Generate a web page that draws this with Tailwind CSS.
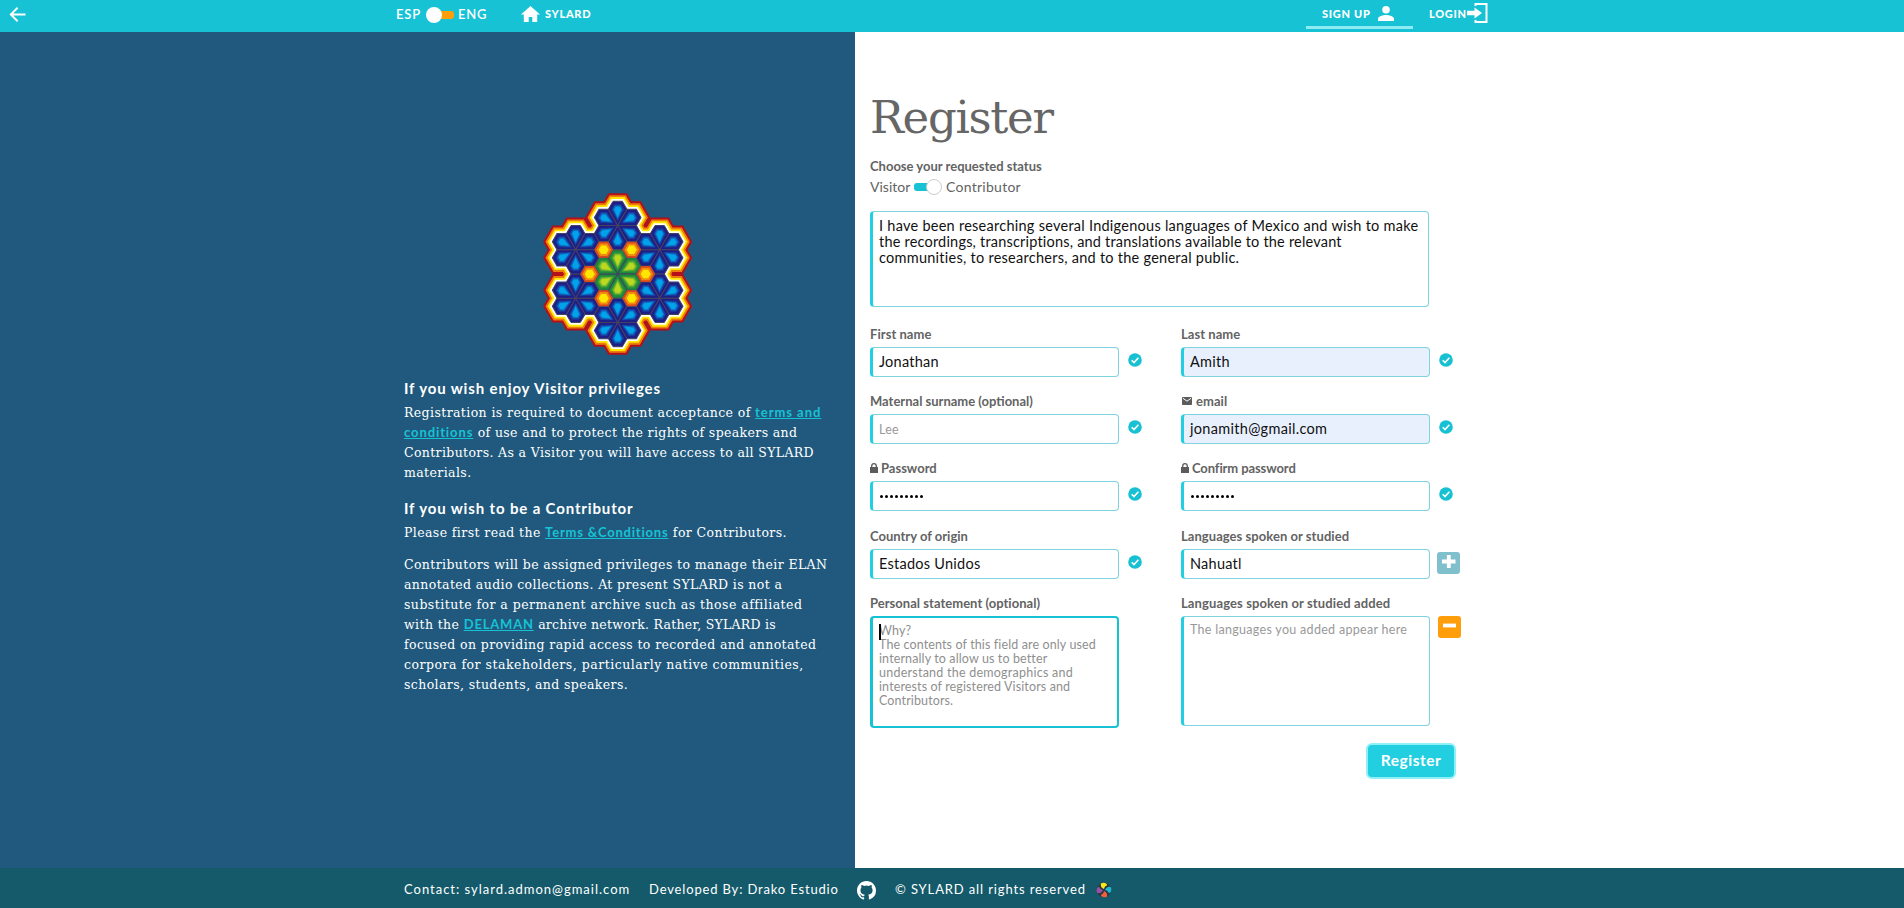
<!DOCTYPE html>
<html lang="en">
<head>
<meta charset="utf-8">
<title>SYLARD - Register</title>
<script src="https://cdn.jsdelivr.net/npm/@tailwindcss/browser@4"></script>
</head>
<body class="flex h-[908px] w-[1904px] flex-col overflow-hidden bg-white font-['Lato',sans-serif] text-[#636363]">

<svg class="hidden">
  <defs>
    <symbol id="check" viewBox="0 0 14 14"><circle cx="7" cy="7" r="6.8" fill="#17c1d3"/><path d="M3.7 7.3 6 9.6l4.4-4.9" fill="none" stroke="#fff" stroke-width="1.6"/></symbol>
    <symbol id="lock" viewBox="0 0 8 10"><path d="M0 4h8v6H0z" fill="#5c5c5c"/><path d="M1.7 4.5V3a2.3 2.3 0 0 1 4.6 0v1.5" fill="none" stroke="#5c5c5c" stroke-width="1.3"/></symbol>
  </defs>
</svg>

<header class="flex h-8 shrink-0 items-start bg-[#17c2d4] text-white">
  <div class="flex h-7 w-[396px] items-center pl-[9px]">
    <svg class="h-[15px] w-[17px]" viewBox="0 0 17 15" fill="none" stroke="#fff" stroke-width="1.9"><path d="M16.5 7.5H1.8M8.6.8 1.8 7.5l6.8 6.7"/></svg>
  </div>
  <div class="flex h-[29px] w-[125px] items-center text-[13px] font-semibold tracking-[0.8px]">
    <span class="w-[30px]">ESP</span>
    <span class="flex w-[32px] items-center"><span class="z-10 size-4 rounded-full bg-white"></span><span class="-ml-1.5 h-2 w-[18px] rounded-[3px] bg-[#ff9d0a]"></span></span>
    <span>ENG</span>
  </div>
  <div class="flex h-7 w-[785px] items-center text-[11px] font-black tracking-[0.7px]">
    <svg class="mr-[5px] h-4 w-[19px]" viewBox="0 0 19 16" fill="#fff"><path d="M9.5 0 0 8.6h2.8V16h4.9v-5h3.6v5h4.9V8.6H19z"/></svg>SYLARD
  </div>
  <div class="flex h-[29px] w-[107px] items-center border-b-3 border-[#8eeaf3] pl-4 text-[11px] font-black tracking-[0.7px]">
    <span class="mt-0.5 w-[56px]">SIGN UP</span>
    <svg class="mt-px h-[15px] w-4" viewBox="0 0 16 15" fill="#fff"><circle cx="8" cy="3.8" r="3.8"/><path d="M0 15v-2.2C0 10.2 5.2 9 8 9s8 1.2 8 3.8V15z"/></svg>
  </div>
  <div class="flex h-7 items-center pl-4 text-[11px] font-black tracking-[0.7px]">
    <span class="w-[38px]">LOGIN</span>
    <svg class="-mt-0.5 h-5 w-[21px]" viewBox="0 0 21 20"><path d="M8.5 3V1h11v18h-11v-2" fill="none" stroke="#fff" stroke-width="2"/><path d="M0 7.8h7.5V4.6L15 10l-7.5 5.4v-3.2H0z" fill="#fff"/></svg>
  </div>
</header>

<main class="flex h-[836px] shrink-0">
  <section class="w-[855px] bg-[#20597d] pl-[404px] pt-[148px] text-white">
    <svg class="ml-[126px] h-[190px] w-[180px]" viewBox="0 0 540 570">
      <defs>
        <path id="petal" d="M0 0-28-48.5-14-72.7H14L28-48.5z"/>
        <g id="flowerShape"><use href="#petal"/><use href="#petal" transform="rotate(60)"/><use href="#petal" transform="rotate(120)"/><use href="#petal" transform="rotate(180)"/><use href="#petal" transform="rotate(240)"/><use href="#petal" transform="rotate(300)"/></g>
        <g id="ringShape"><use href="#flowerShape" y="-145.5"/><use href="#flowerShape" x="126" y="-72.7"/><use href="#flowerShape" x="126" y="72.7"/><use href="#flowerShape" y="145.5"/><use href="#flowerShape" x="-126" y="72.7"/><use href="#flowerShape" x="-126" y="-72.7"/></g>
        <g id="bluePetal">
          <use href="#petal" fill="#1d1f86" stroke="#45425f" stroke-width="3"/>
          <path d="M0-13-19-48-10-64H10L19-48z" fill="#1a3b9d"/>
          <path d="M0-18-14.500-48-8-60H8L14.500-48z" fill="#0c6cc2"/>
          <path d="M0-24-10.500-48-6-56H6L10.500-48z" fill="#00a3ea"/>
        </g>
        <g id="greenPetal">
          <use href="#petal" fill="#1b8a3b" stroke="#45425f" stroke-width="3"/>
          <path d="M0-13-19-48-10-64H10L19-48z" fill="#43a036"/>
          <path d="M0-18-14.500-48-8-60H8L14.500-48z" fill="#7fbb2c"/>
          <path d="M0-24-10.500-48-6-56H6L10.500-48z" fill="#bcd81f"/>
        </g>
        <g id="blueFlower"><use href="#bluePetal"/><use href="#bluePetal" transform="rotate(60)"/><use href="#bluePetal" transform="rotate(120)"/><use href="#bluePetal" transform="rotate(180)"/><use href="#bluePetal" transform="rotate(240)"/><use href="#bluePetal" transform="rotate(300)"/></g>
        <g id="sun"><path d="M-28 0-14-24.200H14L28 0 14 24.200H-14z" fill="#d8491a"/><path d="M-22 0-11-19H11L22 0 11 19H-11z" fill="#f08a10"/><path d="M-15 0-7.500-13H7.500L15 0 7.500 13H-7.500z" fill="#ffe600"/></g>
      </defs>
      <g transform="translate(263 282)" stroke-miterlimit="1.5">
        <use href="#ringShape" stroke="#b5101a" stroke-width="48"/>
        <use href="#ringShape" stroke="#ee7d0c" stroke-width="36"/>
        <use href="#ringShape" stroke="#ffe600" stroke-width="25"/>
        <use href="#ringShape" stroke="#fff" stroke-width="14"/>
        <use href="#blueFlower" y="-145.5"/><use href="#blueFlower" x="126" y="-72.7"/><use href="#blueFlower" x="126" y="72.7"/><use href="#blueFlower" y="145.5"/><use href="#blueFlower" x="-126" y="72.7"/><use href="#blueFlower" x="-126" y="-72.7"/>
        <use href="#greenPetal"/><use href="#greenPetal" transform="rotate(60)"/><use href="#greenPetal" transform="rotate(120)"/><use href="#greenPetal" transform="rotate(180)"/><use href="#greenPetal" transform="rotate(240)"/><use href="#greenPetal" transform="rotate(300)"/>
        <use href="#sun" x="84"/><use href="#sun" x="-84"/><use href="#sun" x="42" y="-72.7"/><use href="#sun" x="-42" y="-72.7"/><use href="#sun" x="42" y="72.7"/><use href="#sun" x="-42" y="72.7"/>
      </g>
    </svg>
    <h2 class="mt-[6px] h-6 text-[15px] font-bold leading-6 tracking-[0.86px]">If you wish enjoy Visitor privileges</h2>
    <p class="mt-[3px] whitespace-nowrap font-['DejaVu_Serif',serif] text-[12.5px] leading-5 tracking-[0.4px]">Registration is required to document acceptance of <a class="font-['Lato'] text-[13px] font-bold leading-none tracking-[0.95px] text-[#17c2d4] underline">terms and</a><br><a class="font-['Lato'] text-[13px] font-bold leading-none tracking-[0.9px] text-[#17c2d4] underline">conditions</a> <span class="tracking-[0.37px]">of use and to protect the rights of speakers and</span><br><span class="tracking-[0.36px]">Contributors. As a Visitor you will have access to all SYLARD</span><br>materials.</p>
    <h2 class="mt-[13px] h-6 text-[15px] font-bold leading-6 tracking-[0.86px]">If you wish to be a Contributor</h2>
    <p class="mt-[3px] whitespace-nowrap font-['DejaVu_Serif',serif] text-[12.5px] leading-5 tracking-[0.4px]">Please first read the <a class="font-['Lato'] text-[13px] font-bold leading-none tracking-[0.8px] text-[#17c2d4] underline">Terms &amp;Conditions</a> for Contributors.</p>
    <p class="mt-3 whitespace-nowrap font-['DejaVu_Serif',serif] text-[12.5px] leading-5 tracking-[0.39px]">Contributors will be assigned privileges to manage their ELAN<br>annotated audio collections. At present SYLARD is not a<br><span class="tracking-[0.46px]">substitute for a permanent archive such as those affiliated</span><br>with the <a class="font-['Lato'] text-[13px] font-bold leading-none tracking-[0.8px] text-[#17c2d4] underline">DELAMAN</a> <span class="tracking-[0.25px]">archive network. Rather, SYLARD is</span><br>focused on providing rapid access to recorded and annotated<br><span class="tracking-[0.5px]">corpora for stakeholders, particularly native communities,</span><br>scholars, students, and speakers.</p>
  </section>

  <section class="w-[1049px] pl-[15px] pt-[54px]">
    <h1 class="h-[64px] font-['DejaVu_Serif',serif] text-[45px] leading-[64px] tracking-[-1.3px] text-[#666]">Register</h1>
    <div class="mt-[6px] h-5 text-[13px] font-bold leading-5">Choose your requested status</div>
    <div class="flex h-5 items-center text-[14px] tracking-[0.27px]">
      <span class="w-11 tracking-normal">Visitor</span>
      <span class="mt-px flex w-8 items-center"><span class="h-2 w-[18px] rounded-[3px] bg-[#17c2d4]"></span><span class="-ml-1.5 size-4 rounded-full border border-[#ccc] bg-white"></span></span>
      <span>Contributor</span>
    </div>
    <div class="mt-[15px] h-24 w-[559px] whitespace-nowrap rounded border border-l-3 border-[#7ed3df] border-l-[#22cfe0] pl-1.5 pt-[6px] text-[14.5px] leading-4 tracking-[0.26px] text-[#111]">I have been researching several Indigenous languages of Mexico and wish to make<br><span class="tracking-[0.2px]">the recordings, transcriptions, and translations available to the relevant</span><br>communities, to researchers, and to the general public.</div>

    <div class="mt-[17px] grid grid-cols-[311px_300px] grid-rows-[67px_67px_68px_67px_125px] text-[14.5px] tracking-[0.25px] text-[#111]">
      <div>
        <div class="mb-[3px] h-5 text-[13px] font-bold leading-5 tracking-[0.05px] text-[#636363]">First name</div>
        <div class="flex items-center"><div class="flex h-[30px] w-[249px] items-center rounded border border-l-3 border-[#7ed3df] border-l-[#22cfe0] pl-1.5">Jonathan</div><svg class="-mt-1 ml-[9px] size-3.5"><use href="#check"/></svg></div>
      </div>
      <div>
        <div class="mb-[3px] h-5 text-[13px] font-bold leading-5 tracking-[0.05px] text-[#636363]">Last name</div>
        <div class="flex items-center"><div class="flex h-[30px] w-[249px] items-center rounded border border-l-3 border-[#7ed3df] border-l-[#22cfe0] bg-[#e8f0fe] pl-1.5">Amith</div><svg class="-mt-1 ml-[9px] size-3.5"><use href="#check"/></svg></div>
      </div>
      <div>
        <div class="mb-[3px] h-5 text-[13px] font-bold leading-5 tracking-normal text-[#636363]">Maternal surname (optional)</div>
        <div class="flex items-center"><div class="flex h-[30px] w-[249px] items-center rounded border border-l-3 border-[#7ed3df] border-l-[#22cfe0] pl-1.5 pt-0.5 text-[12.5px] text-[#999]">Lee</div><svg class="-mt-1 ml-[9px] size-3.5"><use href="#check"/></svg></div>
      </div>
      <div>
        <div class="mb-[3px] flex h-5 items-center text-[13px] font-bold leading-5 tracking-[0.05px] text-[#636363]"><svg class="ml-px mr-1 h-2 w-2.5" viewBox="0 0 10 8"><rect width="10" height="8" rx=".8" fill="#5c5c5c"/><path d="m1 1.300 4 2.900 4-2.900" fill="none" stroke="#fff"/></svg>email</div>
        <div class="flex items-center"><div class="flex h-[30px] w-[249px] items-center rounded border border-l-3 border-[#7ed3df] border-l-[#22cfe0] bg-[#e8f0fe] pl-1.5 tracking-[0.31px]">jonamith@gmail.com</div><svg class="-mt-1 ml-[9px] size-3.5"><use href="#check"/></svg></div>
      </div>
      <div>
        <div class="mb-[3px] flex h-5 items-center text-[13px] font-bold leading-5 tracking-normal text-[#636363]"><svg class="mr-[3px] h-2.5 w-2"><use href="#lock"/></svg>Password</div>
        <div class="flex items-center"><div class="flex h-[30px] w-[249px] items-center gap-[2px] rounded border border-l-3 border-[#7ed3df] border-l-[#22cfe0] pl-[7px]"><i class="size-[3px] rounded-full bg-black"></i><i class="size-[3px] rounded-full bg-black"></i><i class="size-[3px] rounded-full bg-black"></i><i class="size-[3px] rounded-full bg-black"></i><i class="size-[3px] rounded-full bg-black"></i><i class="size-[3px] rounded-full bg-black"></i><i class="size-[3px] rounded-full bg-black"></i><i class="size-[3px] rounded-full bg-black"></i><i class="size-[3px] rounded-full bg-black"></i></div><svg class="-mt-1 ml-[9px] size-3.5"><use href="#check"/></svg></div>
      </div>
      <div>
        <div class="mb-[3px] flex h-5 items-center text-[13px] font-bold leading-5 tracking-[-0.1px] text-[#636363]"><svg class="mr-[3px] h-2.5 w-2"><use href="#lock"/></svg>Confirm password</div>
        <div class="flex items-center"><div class="flex h-[30px] w-[249px] items-center gap-[2px] rounded border border-l-3 border-[#7ed3df] border-l-[#22cfe0] pl-[7px]"><i class="size-[3px] rounded-full bg-black"></i><i class="size-[3px] rounded-full bg-black"></i><i class="size-[3px] rounded-full bg-black"></i><i class="size-[3px] rounded-full bg-black"></i><i class="size-[3px] rounded-full bg-black"></i><i class="size-[3px] rounded-full bg-black"></i><i class="size-[3px] rounded-full bg-black"></i><i class="size-[3px] rounded-full bg-black"></i><i class="size-[3px] rounded-full bg-black"></i></div><svg class="-mt-1 ml-[9px] size-3.5"><use href="#check"/></svg></div>
      </div>
      <div>
        <div class="mb-[3px] h-5 text-[13px] font-bold leading-5 tracking-normal text-[#636363]">Country of origin</div>
        <div class="flex items-center"><div class="flex h-[30px] w-[249px] items-center rounded border border-l-3 border-[#7ed3df] border-l-[#22cfe0] pl-1.5">Estados Unidos</div><svg class="-mt-1 ml-[9px] size-3.5"><use href="#check"/></svg></div>
      </div>
      <div>
        <div class="mb-[3px] h-5 text-[13px] font-bold leading-5 tracking-[0.05px] text-[#636363]">Languages spoken or studied</div>
        <div class="flex items-center"><div class="flex h-[30px] w-[249px] items-center rounded border border-l-3 border-[#7ed3df] border-l-[#22cfe0] pl-1.5">Nahuatl</div>
          <div class="-mt-0.5 ml-[7px] h-[22px] w-[23px] rounded-[3px] bg-[#80bfcc]"><svg class="h-full w-full" viewBox="0 0 23 22"><path d="M5 9.500h13.500M11.800 3v13" stroke="#fff" stroke-width="3.800"/></svg></div></div>
      </div>
      <div>
        <div class="mb-[3px] h-5 text-[13px] font-bold leading-5 tracking-[0.03px] text-[#636363]">Personal statement (optional)</div>
        <div class="relative h-28 w-[249px] whitespace-nowrap rounded border-2 border-l-3 border-[#17c2d4] pl-1.5 pt-1.5 text-[12.5px] leading-3.5 tracking-[0.12px] text-[#8f8f8f]"><span class="absolute left-1.5 top-[6px] h-4 w-[1.5px] bg-black"></span>Why?<br>The contents of this field are only used<br>internally to allow us to better<br><span class="tracking-[0.24px]">understand the demographics and</span><br>interests of registered Visitors and<br>Contributors.</div>
      </div>
      <div>
        <div class="mb-[3px] h-5 text-[13px] font-bold leading-5 tracking-[0.11px] text-[#636363]">Languages spoken or studied added</div>
        <div class="flex items-start"><div class="h-[110px] w-[249px] rounded border border-l-3 border-[#7ed3df] border-l-[#22cfe0] pl-1.5 pt-1.5 text-[12.5px] leading-3.5 tracking-[0.3px] text-[#999]">The languages you added appear here</div>
          <div class="ml-2 h-[22px] w-[23px] rounded-[3px] bg-[#ff9d0a]"><svg class="h-full w-full" viewBox="0 0 23 22"><path d="M5 9.500h13" stroke="#fff" stroke-width="3.800"/></svg></div></div>
      </div>
    </div>
    <button class="ml-[496px] mt-[25px] flex h-9 w-[90px] items-center justify-center rounded-md border-2 border-[#8ff0f8] bg-[#22cfe0] pb-px text-[15.5px] font-bold tracking-[0.5px] text-white">Register</button>
  </section>
</main>

<footer class="flex h-10 shrink-0 items-center whitespace-nowrap bg-[#145a6a] pl-[404px] pt-1 text-[13px] text-white">
  <span class="w-[245px] tracking-[0.99px]">Contact: sylard.admon@gmail.com</span>
  <span class="w-[208px] tracking-[0.84px]">Developed By: Drako Estudio</span>
  <svg class="mr-[19px] size-[19px]" viewBox="0 0 16 16" fill="#fff"><path d="M8 0C3.580 0 0 3.580 0 8c0 3.540 2.290 6.530 5.470 7.590.4.070.55-.17.55-.38 0-.19-.01-.82-.01-1.490-2.010.37-2.530-.49-2.690-.94-.09-.23-.48-.94-.82-1.130-.28-.15-.68-.52-.01-.53.63-.01 1.080.58 1.230.82.72 1.210 1.870.87 2.330.66.07-.52.28-.87.51-1.070-1.780-.2-3.640-.89-3.640-3.950 0-.87.31-1.590.82-2.150-.08-.2-.36-1.020.08-2.120 0 0 .67-.21 2.200.82a7.400 7.400 0 0 1 4 0c1.530-1.040 2.200-.82 2.200-.82.44 1.100.16 1.920.08 2.120.51.56.82 1.270.82 2.150 0 3.070-1.870 3.750-3.650 3.950.29.25.54.73.54 1.480 0 1.070-.01 1.930-.01 2.200 0 .21.15.46.55.38A8 8 0 0 0 16 8c0-4.420-3.580-8-8-8z"/></svg>
  <span class="w-[201px] tracking-[0.87px]">© SYLARD all rights reserved</span>
  <svg class="size-4" viewBox="-8 -8 16 16"><circle r="7.200" fill="#263648"/><path id="blade" d="M0-1C-2.500-2-4-4.500-2.800-6.800 0-8 3-7 3.200-4.800 1.800-4.600.3-3 0-1z" fill="#f5ea14"/><path d="M0-1C-2.500-2-4-4.500-2.800-6.800 0-8 3-7 3.200-4.800 1.800-4.600.3-3 0-1z" transform="rotate(90)" fill="#19b9cf"/><path d="M0-1C-2.500-2-4-4.500-2.800-6.800 0-8 3-7 3.200-4.800 1.800-4.600.3-3 0-1z" transform="rotate(180)" fill="#f0603a"/><path d="M0-1C-2.500-2-4-4.500-2.800-6.800 0-8 3-7 3.200-4.800 1.800-4.600.3-3 0-1z" transform="rotate(270)" fill="#9a52a0"/></svg>
</footer>
</body>
</html>
